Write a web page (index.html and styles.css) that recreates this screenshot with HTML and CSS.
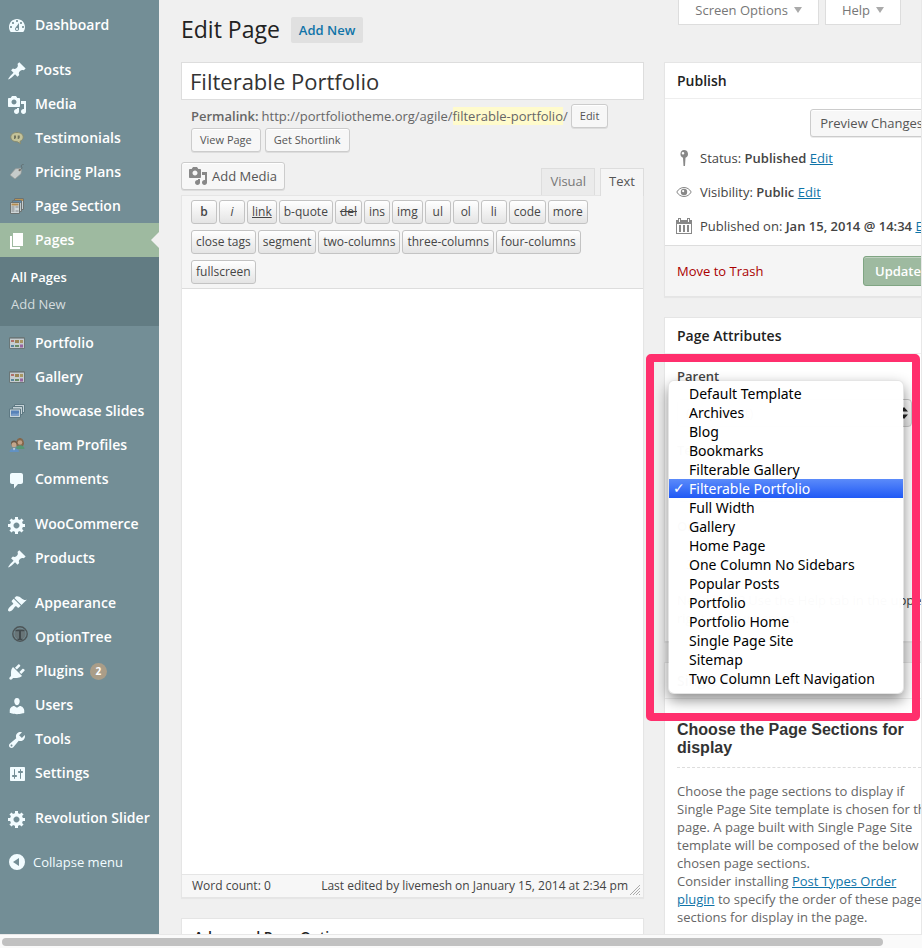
FILE: index.html
```
<!DOCTYPE html>
<html lang="en">
<head>
<meta charset="utf-8">
<title>Edit Page</title>
<link rel="stylesheet" href="styles.css">
</head>
<body>
<svg class="sprite" aria-hidden="true">
  <symbol id="dashboard" viewBox="0 0 20 20"><path fill-rule="evenodd" d="M3.76 16h12.48c1.1-1.37 1.76-3.11 1.76-5 0-4.42-3.58-8-8-8s-8 3.58-8 8c0 1.89.66 3.63 1.76 5zM10 4c.55 0 1 .45 1 1s-.45 1-1 1-1-.45-1-1 .45-1 1-1zM6 6c.55 0 1 .45 1 1s-.45 1-1 1-1-.45-1-1 .45-1 1-1zm8 0c.55 0 1 .45 1 1s-.45 1-1 1-1-.45-1-1 .45-1 1-1zm-5.37 5.55L12 7v6c0 1.1-.9 2-2 2s-2-.9-2-2c0-.57.24-1.08.63-1.45zM4 10c.55 0 1 .45 1 1s-.45 1-1 1-1-.45-1-1 .45-1 1-1zm12 0c.55 0 1 .45 1 1s-.45 1-1 1-1-.45-1-1 .45-1 1-1zm-5 3c0-.55-.45-1-1-1s-1 .45-1 1 .45 1 1 1 1-.45 1-1z"/></symbol>
  <symbol id="pin" viewBox="0 0 20 20"><path d="M10.44 3.02l1.82-1.82 6.36 6.35-1.83 1.82c-1.05-.68-2.48-.57-3.41.36l-.75.75c-.92.93-1.04 2.35-.35 3.41l-1.83 1.82-2.41-2.41-2.8 2.79c-.42.42-3.38 2.71-3.8 2.29s1.86-3.39 2.28-3.81l2.79-2.79L4.1 9.36l1.83-1.82c1.05.69 2.48.57 3.4-.36l.75-.75c.93-.92 1.05-2.35.36-3.41z"/></symbol>
  <symbol id="media" viewBox="0 0 20 20"><path fill-rule="evenodd" d="M13 11V4c0-.55-.45-1-1-1h-1.67L9 1H5L3.67 3H2c-.55 0-1 .45-1 1v7c0 .55.45 1 1 1h10c.55 0 1-.45 1-1zM7 4.5c1.38 0 2.5 1.12 2.5 2.5S8.38 9.5 7 9.5 4.5 8.38 4.5 7 5.62 4.5 7 4.5zM14 6h5v10.5c0 1.38-1.12 2.5-2.5 2.5S14 17.88 14 16.5s1.12-2.5 2.5-2.5c.17 0 .34.02.5.05V9h-3V6zm-4 8.05V13h2v3.5c0 1.38-1.12 2.5-2.5 2.5S7 17.88 7 16.5 8.12 14 9.5 14c.17 0 .34.02.5.05z"/></symbol>
  <symbol id="pages" viewBox="0 0 20 20"><path d="M6 15V2h10v13H6zm-1 1h8v2H3V5h2v11z"/></symbol>
  <symbol id="comments" viewBox="0 0 20 20"><path d="M5 3h9c1.1 0 2 .9 2 2v7c0 1.100-.9 2-2 2h-3l-4 4.500V14H5c-1.100 0-2-.9-2-2V5c0-1.100.9-2 2-2z"/></symbol>
  <symbol id="gear" viewBox="0 0 20 20"><path fill-rule="evenodd" d="M18 12h-2.180c-.17.7-.44 1.350-.81 1.930l1.540 1.540-2.100 2.100-1.540-1.540c-.58.36-1.230.63-1.910.79V19H8v-2.180c-.68-.16-1.330-.43-1.910-.79l-1.540 1.540-2.120-2.120 1.540-1.540c-.36-.58-.63-1.230-.79-1.910H1V9.030h2.170c.16-.7.44-1.350.8-1.940L2.430 5.550l2.100-2.100 1.540 1.540c.58-.37 1.240-.64 1.930-.81V2h3v2.180c.68.16 1.330.43 1.910.79l1.540-1.540 2.120 2.120-1.540 1.540c.36.59.64 1.240.8 1.940H18V12zm-8.500 1.500c1.660 0 3-1.340 3-3s-1.340-3-3-3-3 1.340-3 3 1.340 3 3 3z"/></symbol>
  <symbol id="brush" viewBox="0 0 20 20"><path d="M14.480 11.060L7.410 3.990l1.500-1.500c.5-.56 2.300-.47 3.510.32 1.210.8 1.430 1.280 2.910 2.100 1.180.64 2.450 1.260 4.450.85zm-.71.71L6.700 4.700 4.930 6.470c-.39.39-.39 1.020 0 1.410l1.060 1.060c.39.39.39 1.030 0 1.420-.6.6-1.430 1.110-2.210 1.690-.35.26-.7.53-1.010.84C1.430 14.230.4 16.080 1.400 17.070c.99 1 2.840-.03 4.180-1.360.31-.31.58-.66.85-1.020.57-.78 1.080-1.610 1.690-2.210.39-.39 1.020-.39 1.410 0l1.060 1.060c.39.39 1.020.39 1.410 0z"/></symbol>
  <symbol id="plug" viewBox="0 0 20 20"><path d="M13.110 4.360L9.870 7.600 8 5.730l3.240-3.240c.35-.34 1.050-.2 1.560.32.52.51.66 1.210.31 1.550zm-8 1.770l.91-1.120 9.010 9.010-1.190.84c-.71.71-2.630 1.160-3.820 1.160H6.140L4.900 17.260c-.59.59-1.540.59-2.120 0-.59-.58-.59-1.530 0-2.120l1.240-1.240v-3.880c0-1.130.4-3.190 1.090-3.890zm7.260 3.970l3.240-3.240c.34-.35 1.040-.21 1.550.31.52.51.66 1.210.31 1.550l-3.240 3.250z"/></symbol>
  <symbol id="user" viewBox="0 0 20 20"><path d="M10 9.250c-2.270 0-2.730-3.440-2.730-3.440C7 4.020 7.820 2 9.970 2c2.160 0 2.980 2.020 2.710 3.810 0 0-.41 3.440-2.680 3.440zm0 2.570L12.720 10c2.390 0 4.520 2.330 4.520 4.530v2.490s-3.650 1.130-7.240 1.130c-3.650 0-7.240-1.130-7.240-1.130v-2.490c0-2.250 1.940-4.480 4.470-4.480z"/></symbol>
  <symbol id="wrench" viewBox="0 0 20 20"><path fill-rule="evenodd" d="M16.680 9.770c-1.340 1.340-3.300 1.670-4.950.99l-5.410 6.520c-.99.99-2.590.99-3.580 0s-.99-2.590 0-3.570l6.520-5.420c-.68-1.650-.35-3.610.99-4.950 1.280-1.280 3.120-1.620 4.720-1.060l-2.890 2.890 2.820 2.820 2.860-2.870c.53 1.580.18 3.390-1.080 4.650zM3.810 16.210c.4.39 1.040.39 1.430 0 .4-.4.4-1.040 0-1.430-.39-.4-1.030-.4-1.430 0-.39.39-.39 1.030 0 1.430z"/></symbol>
  <symbol id="sliders" viewBox="0 0 20 20"><path fill-rule="evenodd" d="M18 16V4c0-.55-.45-1-1-1H4c-.55 0-1 .45-1 1v12c0 .55.45 1 1 1h13c.55 0 1-.45 1-1zM8 11h1c.55 0 1 .45 1 1s-.45 1-1 1H8v1.500c0 .28-.22.5-.5.5s-.5-.22-.5-.5V13H6c-.55 0-1-.45-1-1s.45-1 1-1h1V5.500c0-.28.22-.5.5-.5s.5.22.5.5V11zm5-2h-1c-.55 0-1-.45-1-1s.45-1 1-1h1V5.500c0-.28.22-.5.5-.5s.5.22.5.5V7h1c.55 0 1 .45 1 1s-.45 1-1 1h-1v5.500c0 .28-.22.5-.5.5s-.5-.22-.5-.5V9z"/></symbol>
  <symbol id="collapse" viewBox="0 0 20 20"><path fill-rule="evenodd" d="M10 2a8 8 0 1 0 0 16 8 8 0 0 0 0-16zM12 6v8l-6-4z"/></symbol>
  <symbol id="quote" viewBox="0 0 16 16"><path d="M8 2.500c3.700 0 6.200 1.900 6.200 4.600 0 2-1.400 3.500-3.200 4.200l.6 2.400-3.200-1.900C4.400 11.800 1.800 9.900 1.800 7.100 1.800 4.400 4.300 2.500 8 2.500z" fill="#e0d59a" stroke="#8f8a62"/><path d="M5 5.500h2v2.500L5.800 9H5zM8.700 5.500h2v2.500L9.500 9h-.8z" fill="#6f6a4a"/></symbol>
  <symbol id="tag" viewBox="0 0 16 16"><path d="M1 11l5.500-6.200 5-.6 1 1.300-.5 4.300L6 15z" fill="#e2e0dc" stroke="#a09c96" stroke-width=".7"/><circle cx="10.600" cy="6.200" r="1.100" fill="#8a6a55"/><path d="M10.600 6.200c2-1 3-2 2-3.200s0-2.800 2-2.500" fill="none" stroke="#5d6668"/></symbol>
  <symbol id="sections" viewBox="0 0 16 16"><path d="M5.500.5h9v11h-9z" fill="#e0e3e4" stroke="#6a6a66"/><path d="M6 2h8" stroke="#ce9440" stroke-width="2"/><path d="M3.500 2.500h9v11h-9z" fill="#e0e3e4" stroke="#6a6a66"/><path d="M4 4h8" stroke="#5a88ae" stroke-width="2"/><path d="M1.500 4.500h9v11h-9z" fill="#eee" stroke="#6a6a66"/><path d="M2.500 6.500h7" stroke="#cc8d3b" stroke-width="2"/><path d="M2.500 9h3M2.500 11h3M2.500 13h3M6.500 9h3M6.500 13h3" stroke="#888"/></symbol>
  <symbol id="grid" viewBox="0 0 16 16"><path d="M.5 2.500h15v11H.5z" fill="#e2e2e2" stroke="#66706f"/><path d="M1 3.500h14" stroke="#9c9c9c"/><path d="M2 5h3v2H2z" fill="#c4665c"/><path d="M6 5h4v3H6z" fill="#a8823f"/><path d="M11 5h3v3h-3z" fill="#b99a54"/><path d="M2 10h3v2H2z" fill="#5484a0"/><path d="M6 10h4v2H6z" fill="#668b55"/><path d="M11 9.500h3v3h-3z" fill="#a456a4"/></symbol>
  <symbol id="slides" viewBox="0 0 16 16"><path d="M5.500 1.500h10v8h-10z" fill="#dfe8ec" stroke="#58727d"/><path d="M3.500 3.500h10v8h-10z" fill="#dfe8ec" stroke="#58727d"/><path d="M.5 6h11v8.500H.5z" fill="#e8eef2" stroke="#58727d"/><path d="M2 7.500h8V13H2z" fill="#4f7fc4"/><path d="M2 12c2-3 5 0 8-2v3H2z" fill="#7ea3d8"/></symbol>
  <symbol id="team" viewBox="0 0 16 16"><path d="M7 7c0-8 8-8 8 0l-1 2H8z" fill="#8b5a32"/><circle cx="11" cy="5.500" r="2.300" fill="#dba57e"/><path d="M7 12c0-5 8.500-5 8.500 0z" fill="#4d9a68"/><circle cx="5" cy="6.500" r="3" fill="#65472f"/><circle cx="5" cy="7.700" r="2.500" fill="#e0ae88"/><path d="M.5 15c0-5 9.500-5 9.500 0z" fill="#5b93d2"/><path d="M4 11.300h2.200L5 13.500z" fill="#fff"/></symbol>
  <symbol id="tree" viewBox="0 0 16 16"><circle cx="8" cy="8" r="7.200" fill="none" stroke="#4d5557" stroke-width="1.400"/><circle cx="8" cy="8" r="5.600" fill="#687578"/><path d="M3.500 5V3.800h9V5.300H9v7.500h1.500V14h-5v-1.200H7V5.300H3.500z" fill="#414a4d"/></symbol>
  <symbol id="status" viewBox="0 0 20 20"><path fill-rule="evenodd" d="M10 2a4 4 0 0 1 1.500 7.700L11 18h-1.500L9 9.700A4 4 0 0 1 10 2zM9 4a1.300 1.300 0 1 0 0 2.600A1.300 1.300 0 0 0 9 4z"/></symbol>
  <symbol id="eye" viewBox="0 0 20 20"><path d="M2.800 10C6 4 14 4 17.200 10 14 16 6 16 2.800 10z" fill="none" stroke="currentColor"/><path fill-rule="evenodd" d="M10 6.800a3.200 3.200 0 1 0 0 6.400 3.200 3.200 0 0 0 0-6.400zM9.200 8a1.100 1.100 0 1 1-.1 2.200A1.100 1.100 0 0 1 9.200 8z"/></symbol>
  <symbol id="calendar" viewBox="0 0 20 20"><path fill-rule="evenodd" d="M2 4h2V2h3v2h6V2h3v2h2v14H2zm1 4v9h14V8zM5 3v3h1V3zm9 0v3h1V3z"/><path d="M5 9h2v7H5zM9 9h2v7H9zM13 9h2v7h-2z"/></symbol>
</svg>

<div class="app">
  <nav class="menu" aria-label="Main menu">
    <ul class="group">
      <li><a class="item" href="#"><svg class="icon"><use href="#dashboard"/></svg>Dashboard</a></li>
    </ul>
    <ul class="group">
      <li><a class="item" href="#"><svg class="icon"><use href="#pin"/></svg>Posts</a></li>
      <li><a class="item" href="#"><svg class="icon"><use href="#media"/></svg>Media</a></li>
      <li><a class="item" href="#"><svg class="icon picture"><use href="#quote"/></svg>Testimonials</a></li>
      <li><a class="item" href="#"><svg class="icon picture"><use href="#tag"/></svg>Pricing Plans</a></li>
      <li><a class="item" href="#"><svg class="icon picture"><use href="#sections"/></svg>Page Section</a></li>
      <li>
        <a class="item current" href="#"><svg class="icon"><use href="#pages"/></svg>Pages</a>
        <ul class="submenu">
          <li><a class="active" href="#">All Pages</a></li>
          <li><a href="#">Add New</a></li>
        </ul>
      </li>
      <li><a class="item" href="#"><svg class="icon picture"><use href="#grid"/></svg>Portfolio</a></li>
      <li><a class="item" href="#"><svg class="icon picture"><use href="#grid"/></svg>Gallery</a></li>
      <li><a class="item" href="#"><svg class="icon picture"><use href="#slides"/></svg>Showcase Slides</a></li>
      <li><a class="item" href="#"><svg class="icon picture"><use href="#team"/></svg>Team Profiles</a></li>
      <li><a class="item" href="#"><svg class="icon"><use href="#comments"/></svg>Comments</a></li>
    </ul>
    <ul class="group">
      <li><a class="item" href="#"><svg class="icon"><use href="#gear"/></svg>WooCommerce</a></li>
      <li><a class="item" href="#"><svg class="icon"><use href="#pin"/></svg>Products</a></li>
    </ul>
    <ul class="group">
      <li><a class="item" href="#"><svg class="icon"><use href="#brush"/></svg>Appearance</a></li>
      <li><a class="item" href="#"><svg class="icon logo"><use href="#tree"/></svg>OptionTree</a></li>
      <li><a class="item" href="#"><svg class="icon"><use href="#plug"/></svg>Plugins <span class="count">2</span></a></li>
      <li><a class="item" href="#"><svg class="icon"><use href="#user"/></svg>Users</a></li>
      <li><a class="item" href="#"><svg class="icon"><use href="#wrench"/></svg>Tools</a></li>
      <li><a class="item" href="#"><svg class="icon"><use href="#sliders"/></svg>Settings</a></li>
    </ul>
    <ul class="group">
      <li><a class="item" href="#"><svg class="icon"><use href="#gear"/></svg>Revolution Slider</a></li>
    </ul>
    <button class="collapse" type="button"><svg class="icon"><use href="#collapse"/></svg>Collapse menu</button>
  </nav>

  <main class="main">
    <header class="top">
      <h1>Edit Page</h1>
      <a class="add-new" href="#">Add New</a>
      <div class="meta-tabs">
        <button type="button">Screen Options</button>
        <button type="button">Help</button>
      </div>
    </header>

    <div class="columns">
      <div class="primary">
        <input class="title" type="text" aria-label="Title" value="Filterable Portfolio">
        <div class="permalink">
          <strong>Permalink:</strong>
          <span>http://portfoliotheme.org/agile/<mark>filterable-portfolio</mark>/</span>
          <button class="button small" type="button">Edit</button>
          <div class="permalink-actions">
            <button class="button small" type="button">View Page</button>
            <button class="button small" type="button">Get Shortlink</button>
          </div>
        </div>

        <div class="editor-tools">
          <button class="button add-media" type="button"><svg class="icon"><use href="#media"/></svg>Add Media</button>
          <div class="tabs">
            <button type="button">Visual</button>
            <button class="selected" type="button">Text</button>
          </div>
        </div>

        <section class="editor" aria-label="Editor">
          <div class="toolbar">
            <div class="tools">
              <button type="button"><b>b</b></button>
              <button type="button"><i>i</i></button>
              <button type="button"><u>link</u></button>
              <button type="button">b-quote</button>
              <button type="button"><s>del</s></button>
              <button type="button">ins</button>
              <button type="button">img</button>
              <button type="button">ul</button>
              <button type="button">ol</button>
              <button type="button">li</button>
              <button type="button">code</button>
              <button type="button">more</button>
            </div>
            <div class="tools">
              <button type="button">close tags</button>
              <button type="button">segment</button>
              <button type="button">two-columns</button>
              <button type="button">three-columns</button>
              <button type="button">four-columns</button>
            </div>
            <div class="tools">
              <button type="button">fullscreen</button>
            </div>
          </div>
          <textarea aria-label="Content"></textarea>
          <div class="status-bar">
            <span>Word count: 0</span>
            <span class="edited">Last edited by livemesh on January 15, 2014 at 2:34 pm</span>
            <svg class="grip" viewBox="0 0 12 12"><path d="M1 11L11 1M4 11l7-7M7 11l4-4M10 11l1-1"/></svg>
          </div>
        </section>

        <section class="box"><h2>Advanced Page Options</h2></section>
      </div>

      <aside class="side">
        <section class="box">
          <h2>Publish</h2>
          <div class="publish">
            <button class="button preview" type="button">Preview Changes</button>
            <p><svg class="icon"><use href="#status"/></svg><span>Status: <b>Published</b> <a href="#">Edit</a></span></p>
            <p><svg class="icon"><use href="#eye"/></svg><span>Visibility: <b>Public</b> <a href="#">Edit</a></span></p>
            <p><svg class="icon"><use href="#calendar"/></svg><span>Published on: <b>Jan 15, 2014 @ 14:34</b> <a href="#">Edit</a></span></p>
          </div>
          <footer class="publish-actions">
            <a class="trash" href="#">Move to Trash</a>
            <button class="update" type="button">Update</button>
          </footer>
        </section>

        <section class="box attributes">
          <h2>Page Attributes</h2>
          <div class="fields">
            <label for="parent">Parent</label>
            <div class="picker">
              <select id="parent"><option>(no parent)</option></select>
              <svg class="arrows" viewBox="0 0 8 16"><path d="M0 6.500L4 2l4 4.500zM0 9.500L4 14l4-4.500z"/></svg>
            </div>
            <label for="template">Template</label>
            <select id="template"><option>Filterable Portfolio</option></select>
            <label for="order">Order</label>
            <input id="order" type="text" value="3">
            <p>Need help? Use the Help tab in the upper right of your screen.</p>
          </div>
          <ul class="options" role="listbox" aria-label="Template">
            <li role="option">Default Template</li>
            <li role="option">Archives</li>
            <li role="option">Blog</li>
            <li role="option">Bookmarks</li>
            <li role="option">Filterable Gallery</li>
            <li class="chosen" role="option" aria-selected="true">Filterable Portfolio</li>
            <li role="option">Full Width</li>
            <li role="option">Gallery</li>
            <li role="option">Home Page</li>
            <li role="option">One Column No Sidebars</li>
            <li role="option">Popular Posts</li>
            <li role="option">Portfolio</li>
            <li role="option">Portfolio Home</li>
            <li role="option">Single Page Site</li>
            <li role="option">Sitemap</li>
            <li role="option">Two Column Left Navigation</li>
          </ul>
          <div class="highlight"></div>
        </section>

        <section class="box">
          <h2>Single Page Options</h2>
          <div class="sections">
            <h3>Choose the Page Sections for display</h3>
            <p class="intro">Choose the page sections to display if Single Page Site template is chosen for this page. A page built with Single Page Site template will be composed of the below chosen page sections.</p>
            <p>Consider installing <a href="#">Post Types Order plugin</a> to specify the order of these page sections for display in the page.</p>
          </div>
        </section>
      </aside>
    </div>
  </main>
</div>
<div class="scrollbar"><div class="thumb"></div></div>
</body>
</html>
```
FILE: styles.css
```
* { box-sizing: border-box; }
body {
  margin: 0;
  height: 100vh;
  display: flex;
  flex-direction: column;
  overflow: hidden;
  background: #f0f0f0;
  color: #444;
  font: 13px/18px "Open Sans", sans-serif;
}
ul { list-style: none; margin: 0; padding: 0; }
h1, h2, h3, p { margin: 0; }
button, input, select, textarea { font: inherit; color: inherit; margin: 0; }
a { color: #1074a8; }
b { font-weight: 600; }
.sprite { position: absolute; width: 0; height: 0; }
.icon { width: 20px; height: 20px; flex: none; fill: currentColor; }

.app {
  flex: 1;
  min-height: 0;
  display: flex;
  overflow: hidden;
  border-right: 1px solid #e8e8e8;
}

/* Main menu */
.menu {
  flex: 0 0 159px;
  padding-top: 8px;
  background: #738e96;
  color: #fff;
  font-size: 14px;
  font-weight: 600;
}
.group { margin-bottom: 11px; }
.item {
  position: relative;
  display: flex;
  align-items: center;
  gap: 8px;
  height: 34px;
  padding-left: 7px;
  color: #fff;
  text-decoration: none;
  white-space: nowrap;
}
.item .icon { color: #f2fcff; margin-top: 2px; }
.item .picture { width: 16px; height: 16px; margin: 0 2px; opacity: .75; }
.item .logo { width: 16px; height: 16px; margin: 0 -1px 6px 5px; }
.current { background: #9ebaa0; }
.current .icon { color: #fff; }
.current::after {
  content: "";
  position: absolute;
  right: 0;
  top: 9px;
  border: 8px solid transparent;
  border-left: 0;
  border-right-color: #f0f0f0;
}
.submenu {
  padding: 7px 0 8px;
  background: #627c83;
  font-size: 13px;
  font-weight: 400;
}
.submenu a {
  display: block;
  padding: 4px 11px 5px;
  color: #d5dddf;
  text-decoration: none;
}
.submenu .active { color: #fff; font-weight: 600; }
.count {
  width: 17px;
  margin-left: -2px;
  border-radius: 9px;
  background: #aa9d88;
  font-size: 10px;
  font-weight: 700;
  line-height: 17px;
  text-align: center;
}
.collapse {
  display: flex;
  align-items: center;
  gap: 6px;
  height: 32px;
  padding: 0 0 0 7px;
  border: 0;
  background: none;
  color: #f2fcff;
  font-size: 13px;
  font-weight: 400;
}

/* Page header */
.main { flex: 1; min-width: 0; padding-left: 22px; }
.top { display: flex; align-items: flex-start; height: 62px; }
h1 { padding-top: 15px; font-size: 23px; font-weight: 400; line-height: 29px; color: #222; }
.add-new {
  margin: 17px 0 0 11px;
  padding: 4px 8px;
  border-radius: 2px;
  background: #e0e0e0;
  font-weight: 600;
  text-decoration: none;
}
.meta-tabs { display: flex; gap: 6px; margin: 0 20px 0 auto; }
.meta-tabs button {
  height: 25px;
  padding: 0 16px 4px;
  border: 1px solid #ddd;
  border-top: 0;
  background: #fff;
  color: #777;
}
.meta-tabs button::after {
  content: "";
  display: inline-block;
  margin: 0 0 2px 6px;
  border: 4px solid transparent;
  border-top: 6px solid #aaa;
  border-bottom: 0;
}

.columns { display: flex; gap: 20px; align-items: flex-start; }
.primary { flex: 1; min-width: 0; }
.side { flex: 0 0 280px; min-width: 0; margin-right: -23px; }

.button {
  height: 28px;
  padding: 0 10px;
  border: 1px solid #ccc;
  border-radius: 3px;
  background: #f7f7f7;
  box-shadow: inset 0 1px 0 #fff, 0 1px 0 rgba(0, 0, 0, .08);
  color: #555;
  white-space: nowrap;
}
.small { height: 24px; padding: 0 8px; font-size: 11px; }

/* Title and permalink */
.title {
  display: block;
  width: 100%;
  height: 38px;
  padding: 0 8px;
  border: 1px solid #ddd;
  background: #fff;
  color: #333;
  font-size: 22px;
}
.permalink {
  display: flex;
  flex-wrap: wrap;
  align-items: center;
  column-gap: 3px;
  padding: 4px 10px 0;
  color: #666;
}
.permalink strong { font-weight: 600; }
.permalink mark { background: #fffbcc; color: inherit; }
.permalink-actions { flex-basis: 100%; display: flex; gap: 4px; }

/* Editor */
.editor-tools { display: flex; justify-content: space-between; align-items: flex-end; margin-top: 10px; }
.add-media { display: flex; align-items: center; gap: 4px; margin-bottom: 5px; padding: 0 7px 0 6px; }
.add-media .icon { color: #888; }
.tabs { display: flex; gap: 5px; }
.tabs button {
  height: 27px;
  padding: 0 8px 2px;
  border: 1px solid #ddd;
  border-bottom: 0;
  background: #ebebeb;
  color: #777;
}
.tabs .selected {
  position: relative;
  height: 28px;
  margin-bottom: -1px;
  padding-bottom: 3px;
  background: #f5f5f5;
  color: #555;
}
.editor { border: 1px solid #e5e5e5; box-shadow: 0 1px 1px rgba(0, 0, 0, .04); }
.toolbar {
  display: grid;
  gap: 6px;
  padding: 4px 9px;
  border-bottom: 1px solid #ddd;
  background: #f5f5f5;
}
.tools { display: flex; gap: 2px; }
.tools button {
  min-width: 26px;
  height: 24px;
  padding: 0 4px;
  border: 1px solid #c3c3c3;
  border-radius: 3px;
  background: linear-gradient(#fff, #e4e4e4);
  color: #464646;
  font-size: 12px;
}
textarea {
  display: block;
  width: 100%;
  height: 585px;
  padding: 10px;
  border: 0;
  resize: none;
  background: #fff;
}
.status-bar {
  display: flex;
  height: 23px;
  padding-left: 10px;
  border-top: 1px solid #e5e5e5;
  background: #f7f7f7;
  font-size: 12px;
  line-height: 22px;
}
.edited { margin-left: auto; }
.grip { width: 12px; height: 12px; margin: 9px 2px 0 1px; fill: none; stroke: #aaa; }

/* Boxes */
.box {
  margin-bottom: 20px;
  border: 1px solid #e5e5e5;
  background: #fff;
  box-shadow: 0 1px 1px rgba(0, 0, 0, .04);
}
.primary > .box { margin-top: 20px; }
.box h2 {
  padding: 9px 12px 8px;
  border-bottom: 1px solid #eee;
  color: #222;
  font-size: 14px;
  font-weight: 600;
}
.publish { display: grid; grid-template-columns: minmax(0, 1fr); padding: 10px 10px 2px; }
.preview { justify-self: end; margin-bottom: 4px; padding: 0 9px; }
.publish p {
  display: flex;
  align-items: center;
  gap: 6px;
  height: 34px;
  white-space: nowrap;
}
.publish .icon { color: #888; margin-left: -1px; }
.publish-actions {
  display: flex;
  justify-content: space-between;
  align-items: center;
  padding: 10px 10px 10px 12px;
  border-top: 1px solid #ddd;
  background: #f5f5f5;
}
.trash { color: #a00; text-decoration: none; }
.update {
  height: 30px;
  padding: 0 11px;
  border: 1px solid #80a583;
  border-radius: 3px;
  background: #9ebaa0;
  box-shadow: inset 0 1px 0 #bfd1c0;
  color: #fff;
  font-weight: 600;
}

/* Page attributes with the opened template list */
.attributes { position: relative; }
.fields { display: grid; padding: 13px 12px 14px; justify-items: start; }
.fields label { font-weight: 600; }
.fields select {
  width: 235px;
  height: 28px;
  padding: 0 8px;
  border: 1px solid #ccc;
  border-radius: 4px;
  background: linear-gradient(#fff, #e9e9e9);
  appearance: none;
}
.picker { position: relative; margin: 14px 0; }
.fields #template { width: 220px; margin: 15px 0; }
.arrows { position: absolute; right: 4px; top: 6px; width: 8px; height: 16px; fill: #222; }
#order { width: 50px; height: 28px; margin: 15px 0 13px; padding: 0 8px; border: 1px solid #ddd; }
.options {
  position: absolute;
  left: 3px;
  top: 62px;
  width: 236px;
  padding: 3px 0 5px;
  border: 1px solid rgba(0, 0, 0, .1);
  border-radius: 6px;
  background: rgba(255, 255, 255, .98);
  background-clip: padding-box;
  box-shadow: 0 6px 14px rgba(0, 0, 0, .45);
  color: #000;
  font: 14px/19px "Noto Sans", sans-serif;
}
.options li { padding-left: 20px; white-space: nowrap; }
.options .chosen {
  position: relative;
  background: linear-gradient(#5b8bfa, #2059f5);
  color: #fff;
}
.chosen::before {
  content: "✓";
  position: absolute;
  left: 4px;
  font-family: "DejaVu Sans", sans-serif;
}
.highlight {
  position: absolute;
  left: -19px;
  top: 36px;
  width: 274px;
  height: 367px;
  border: 8px solid #ff2f6d;
  border-radius: 5px;
  pointer-events: none;
}

.sections { padding: 22px 12px 20px; color: #666; }
.sections .intro { margin-right: -8px; }
.sections h3 {
  margin-bottom: 14px;
  padding-bottom: 10px;
  border-bottom: 1px dashed #ddd;
  color: #333;
  font: bold 16px/18px "Liberation Sans", sans-serif;
}

/* Horizontal scrollbar */
.scrollbar { flex: none; height: 14px; padding: 3px 2px; border-top: 1px solid #e8e8e8; background: #fafafa; }
.thumb { width: 96%; height: 8px; border-radius: 4px; background: #c1c1c1; }
```
